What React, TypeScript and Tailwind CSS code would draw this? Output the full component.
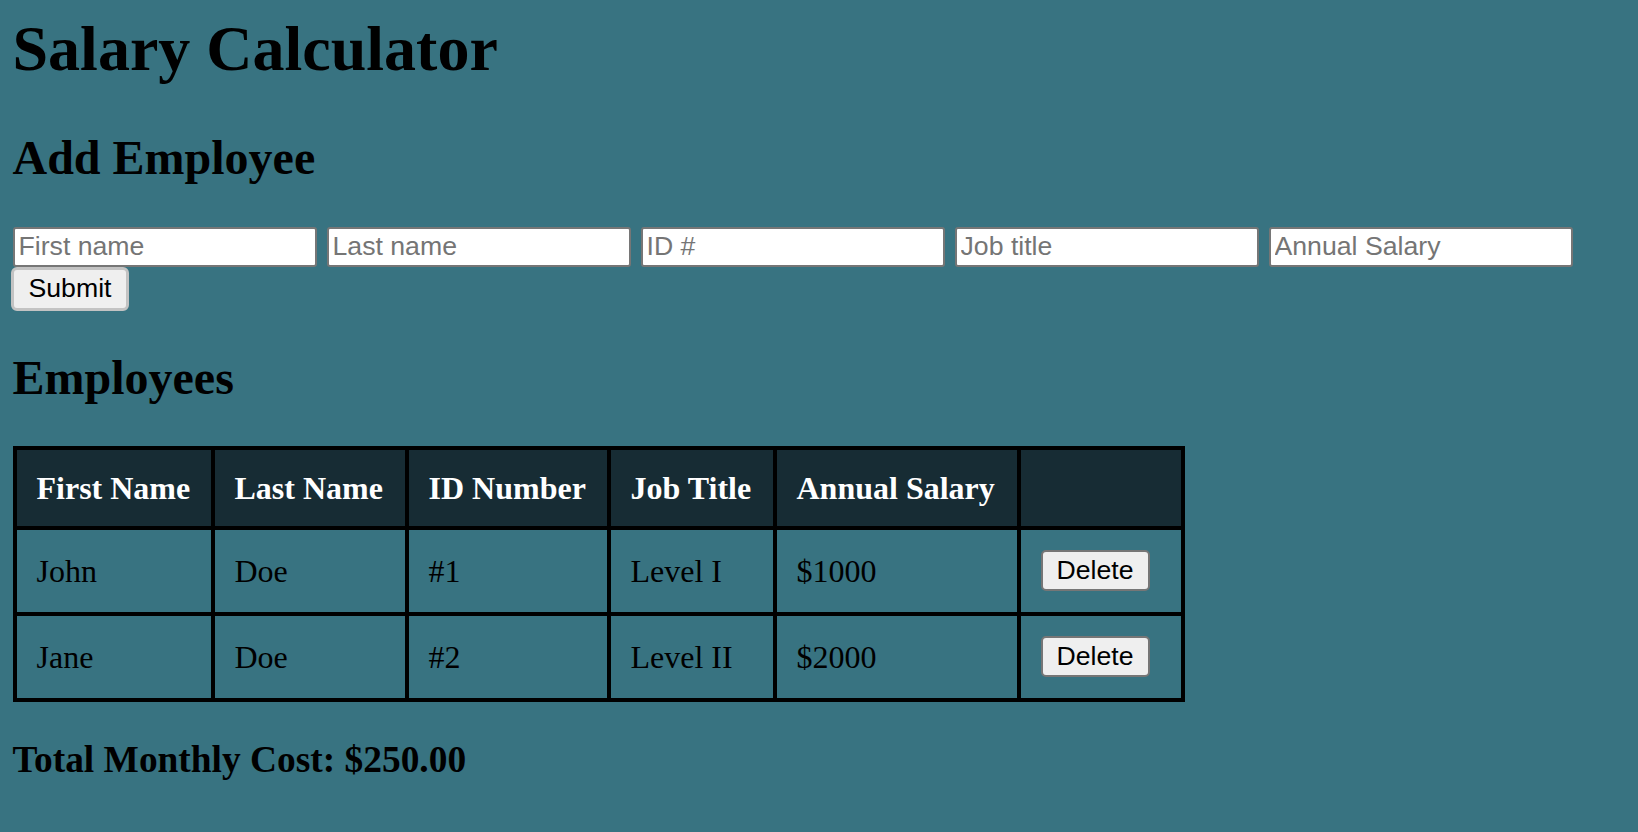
import React from "react";

interface Employee {
  firstName: string;
  lastName: string;
  id: number;
  title: string;
  salary: number;
}

const employees: Employee[] = [
  { firstName: "John", lastName: "Doe", id: 1, title: "Level I", salary: 1000 },
  { firstName: "Jane", lastName: "Doe", id: 2, title: "Level II", salary: 2000 },
];

const fields = ["First name", "Last name", "ID #", "Job title", "Annual Salary"];

export default function App() {
  const monthly = employees.reduce((sum, e) => sum + e.salary, 0) / 12;

  return (
    <div className="min-h-screen bg-[#387381] pl-[12.5px] pt-[12px] pb-[20px] font-['Liberation_Serif',Times,serif] text-black">
      <h1 className="text-[64px] font-bold leading-[74px]">Salary Calculator</h1>

      <h2 className="mt-[44px] text-[48px] font-bold leading-[56px]">Add Employee</h2>

      <form
        className="mt-[40.5px]"
        onSubmit={(e) => {
          e.preventDefault();
        }}
      >
        <div className="flex gap-[10px]">
          {fields.map((f) => (
            <input
              key={f}
              type="text"
              placeholder={f}
              className="h-[40.5px] w-[304px] rounded-[3px] border-2 border-[#767676] bg-white px-[4px] font-['Liberation_Sans',Arial,sans-serif] text-[26.67px] text-black placeholder:text-[#757575]"
            />
          ))}
        </div>
        <button
          type="submit"
          className="-ml-[1.5px] flex h-[43.5px] w-[118px] items-center justify-center rounded-[6px] border-[3px] border-[#c3c3c3] bg-[#efefef] font-['Liberation_Sans',Arial,sans-serif] text-[26.67px] leading-none text-black"
        >
          Submit
        </button>
      </form>

      <h2 className="mt-[39px] text-[48px] font-bold leading-[56px]">Employees</h2>

      <table className="mt-[40px] w-[1172px] table-fixed border-collapse border-4 border-black text-[32px] leading-[36px]">
        <thead>
          <tr className="bg-[#172c34] text-white">
            <th className="w-[198px] border-4 border-black p-[20px] text-left font-bold">First Name</th>
            <th className="w-[194px] border-4 border-black p-[20px] text-left font-bold">Last Name</th>
            <th className="w-[202px] border-4 border-black p-[20px] text-left font-bold">ID Number</th>
            <th className="w-[166px] border-4 border-black p-[20px] text-left font-bold">Job Title</th>
            <th className="w-[244px] border-4 border-black p-[20px] text-left font-bold">Annual Salary</th>
            <th className="w-[164px] border-4 border-black p-[20px]"></th>
          </tr>
        </thead>
        <tbody>
          {employees.map((e) => (
            <tr key={e.id}>
              <td className="border-4 border-black px-[20px] py-[20.5px]">{e.firstName}</td>
              <td className="border-4 border-black px-[20px] py-[20.5px]">{e.lastName}</td>
              <td className="border-4 border-black px-[20px] py-[20.5px]">#{e.id}</td>
              <td className="border-4 border-black px-[20px] py-[20.5px]">{e.title}</td>
              <td className="border-4 border-black px-[20px] py-[20.5px]">${e.salary}</td>
              <td className="border-4 border-black px-[20px] py-[20.5px]">
                <button className="flex h-[41px] w-[109px] items-center justify-center rounded-[5px] border-2 border-[#767676] bg-[#efefef] font-['Liberation_Sans',Arial,sans-serif] text-[26.67px] leading-none text-black">
                  Delete
                </button>
              </td>
            </tr>
          ))}
        </tbody>
      </table>

      <h3 className="mt-[36px] text-[37.4px] font-bold leading-[43px]">
        Total Monthly Cost: ${monthly.toFixed(2)}
      </h3>
    </div>
  );
}
